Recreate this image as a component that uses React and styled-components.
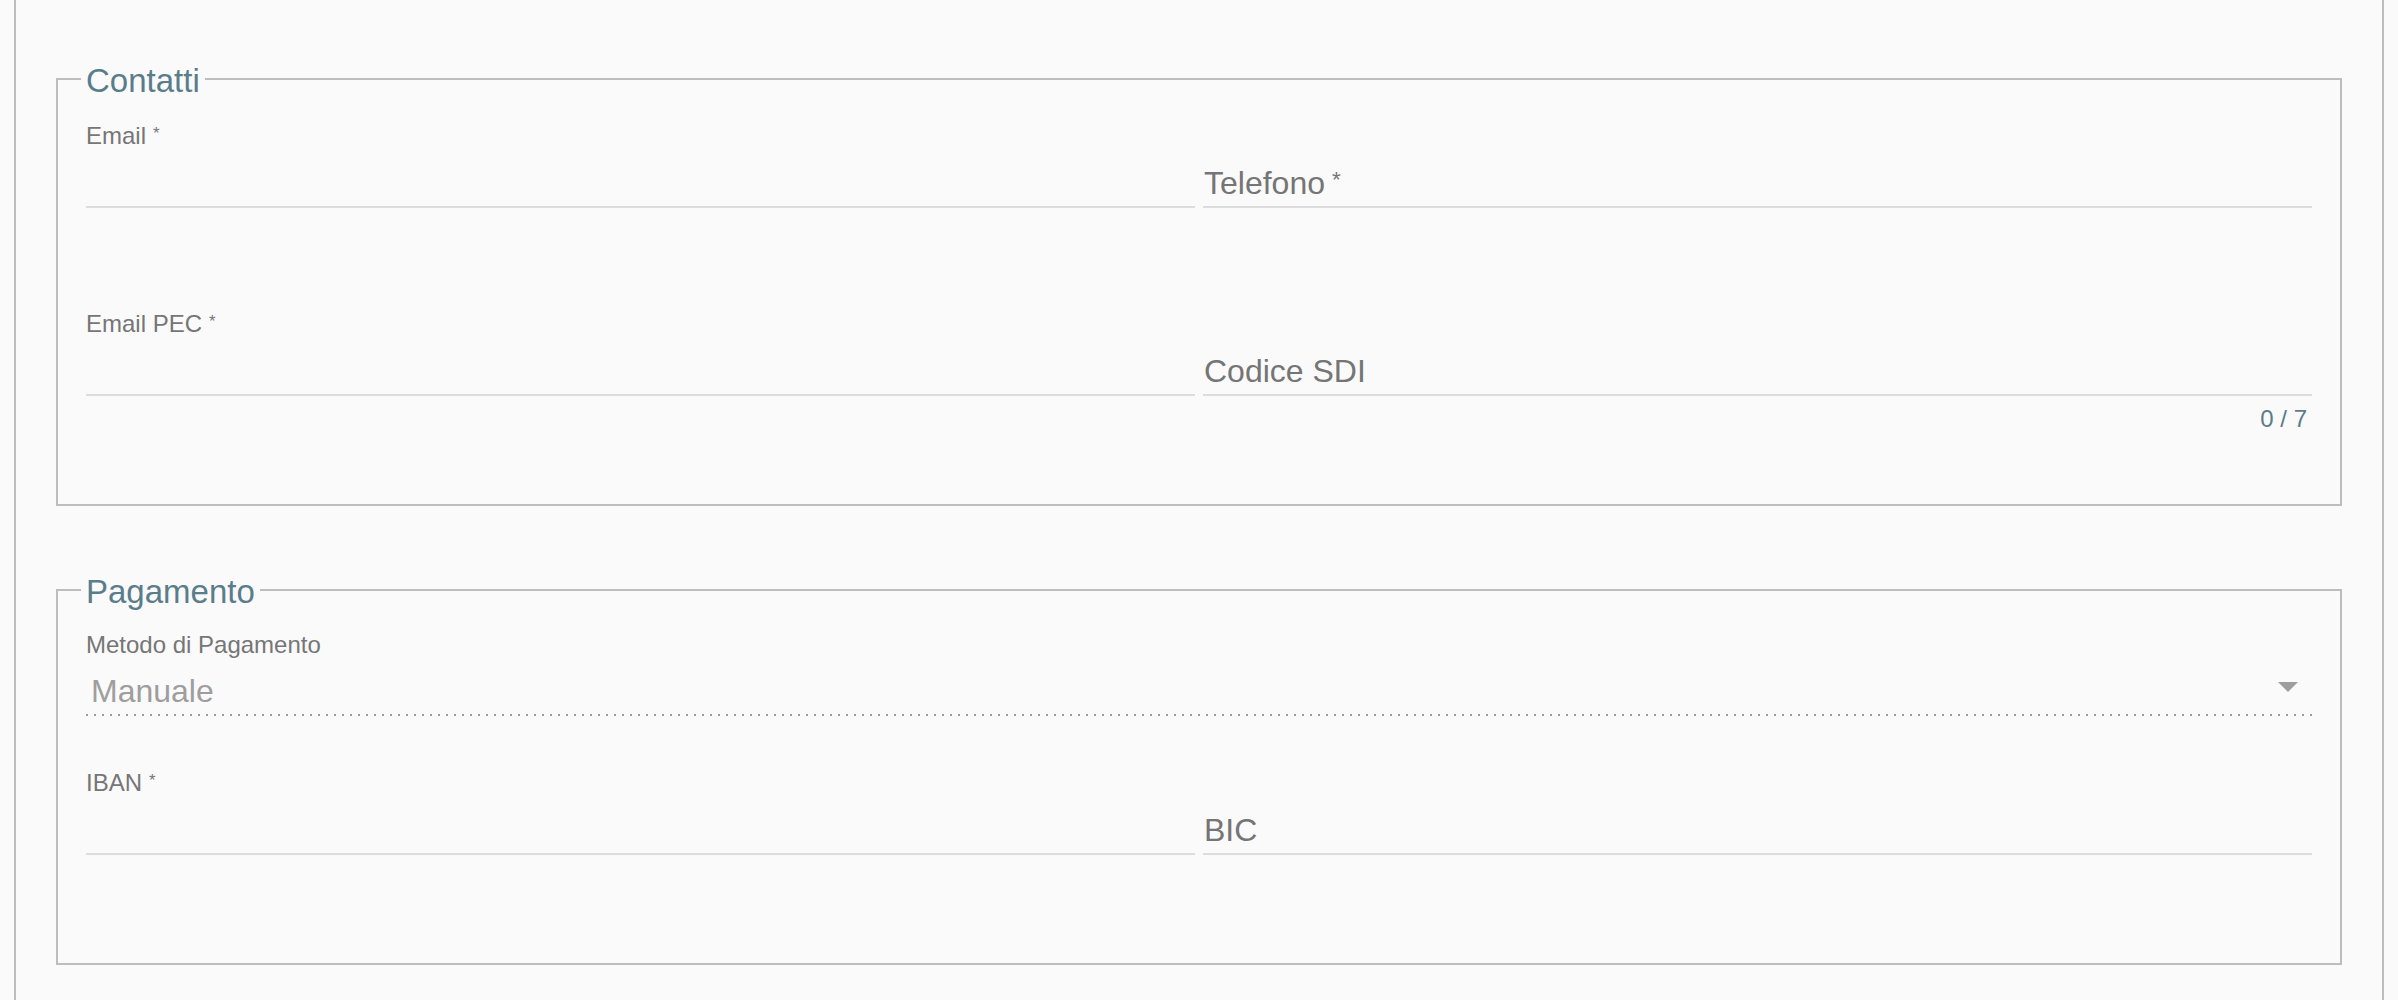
import React from 'react';
import styled, {createGlobalStyle} from 'styled-components';

const GlobalStyle = createGlobalStyle`
  html, body {
    margin: 0;
    padding: 0;
    background: #fafafa;
  }
  body {
    font-family: "Liberation Sans", Arial, sans-serif;
  }
`;

const Page = styled.div`
  padding: 0 14px;
  background: #fafafa;
`;

const Card = styled.div`
  min-height: 100vh;
  box-sizing: border-box;
  padding: 59px 40px 40px;
  border-left: 2px solid #bdbdbd;
  border-right: 2px solid #bdbdbd;
`;

const Group = styled.fieldset`
  margin: ${props => props.first ? '0' : '64px 0 0'};
  padding: 21px 28px 8px;
  min-width: 0;
  border: 2px solid #bdbdbd;
`;

const Legend = styled.legend`
  margin-left: -5px;
  padding: 4px 5px 0;
  font-size: 33px;
  line-height: 36px;
  color: #5a7d8b;
`;

const Row = styled.div`
  display: grid;
  grid-template-columns: ${props => props.full ? '1fr' : '1fr 1fr'};
  column-gap: 8px;
`;

const Field = styled.div`
  display: flex;
  flex-direction: column;
`;

const Label = styled.div`
  height: 30px;
  font-size: 24px;
  line-height: 27px;
  color: #767676;
  white-space: nowrap;
`;

const Input = styled.div`
  display: flex;
  align-items: flex-end;
  justify-content: space-between;
  box-sizing: border-box;
  height: ${props => props.select ? '53px' : '56px'};
  padding: ${props => props.select ? '0 0 5px 5px' : '0 0 5px 1px'};
  font-size: 32px;
  line-height: 36px;
  color: ${props => props.muted ? '#9e9e9e' : '#757575'};
  white-space: nowrap;
`;

const Line = styled.div`
  height: 2px;
  background: ${props => props.dotted
    ? 'repeating-linear-gradient(to right, #9e9e9e 0, #9e9e9e 2px, transparent 2px, transparent 8px)'
    : '#dcdcdc'};
`;

const Details = styled.div`
  box-sizing: border-box;
  height: ${props => props.short ? '51px' : '100px'};
  padding: 8px 5px 0 0;
  text-align: right;
`;

const Counter = styled.span`
  font-size: 24px;
  line-height: 30px;
  color: #5a7d8b;
`;

const Req = styled.span`
  margin-left: 7px;
  font-size: 0.7em;
  vertical-align: 0.3em;
`;

const Arrow = styled.svg`
  align-self: center;
  flex: none;
  width: 48px;
  height: 48px;
  margin-bottom: -2px;
  fill: #9e9e9e;
`;

const TextField = ({label, required, floated, counter}) => (
  <Field>
    <Label>
      {floated && <>{label}{required && <Req>*</Req>}</>}
    </Label>
    <Input>
      {!floated && <span>{label}{required && <Req>*</Req>}</span>}
    </Input>
    <Line/>
    <Details>{counter && <Counter>{counter}</Counter>}</Details>
  </Field>
);

const SelectField = ({label, value}) => (
  <Field>
    <Label>{label}</Label>
    <Input select muted>
      <span>{value}</span>
      <Arrow viewBox="0 0 24 24"><path d="M7 10l5 5 5-5z"/></Arrow>
    </Input>
    <Line dotted/>
    <Details short/>
  </Field>
);

export default function App() {
  return (
    <Page>
      <GlobalStyle/>
      <Card>
        <Group first>
          <Legend>Contatti</Legend>
          <Row>
            <TextField label="Email" required floated/>
            <TextField label="Telefono" required/>
          </Row>
          <Row>
            <TextField label="Email PEC" required floated/>
            <TextField label="Codice SDI" counter="0 / 7"/>
          </Row>
        </Group>
        <Group>
          <Legend>Pagamento</Legend>
          <Row full>
            <SelectField label="Metodo di Pagamento" value="Manuale"/>
          </Row>
          <Row>
            <TextField label="IBAN" required floated/>
            <TextField label="BIC"/>
          </Row>
        </Group>
      </Card>
    </Page>
  );
}
